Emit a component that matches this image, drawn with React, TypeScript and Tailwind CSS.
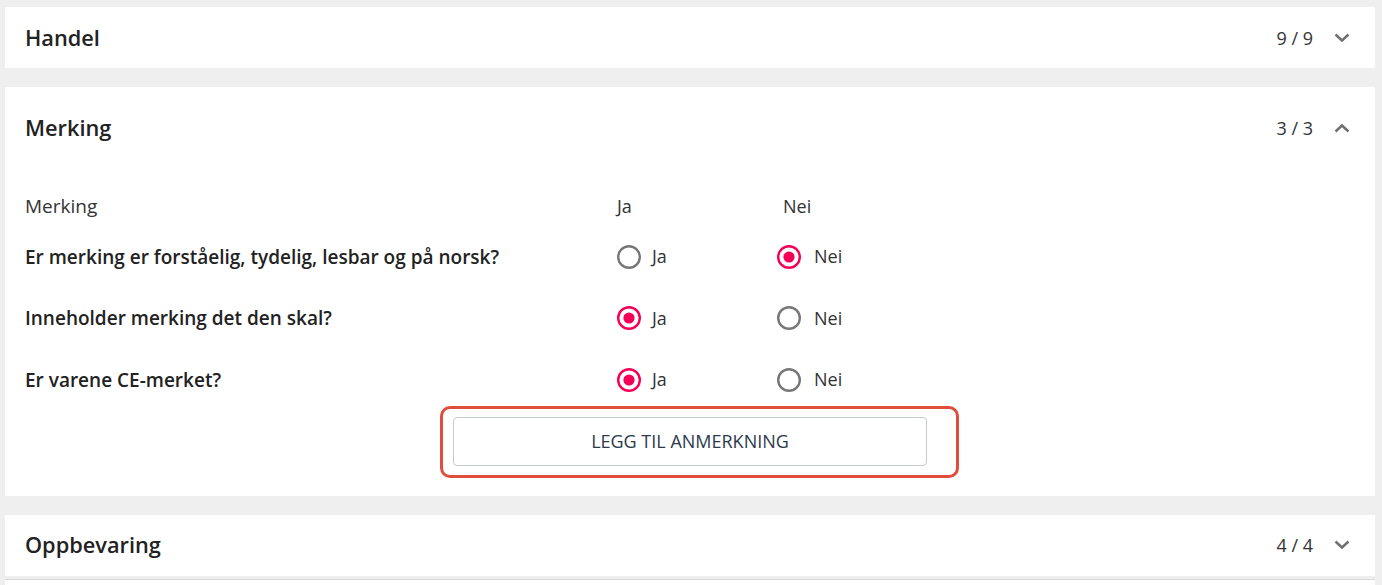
import React from "react";

const font = { fontFamily: '"Open Sans", "Noto Sans", Arial, sans-serif' };

function Chevron({ up }: { up?: boolean }) {
  return (
    <svg width="16" height="10" viewBox="0 0 16 10" className="block">
      {up ? (
        <polyline points="1.5,8.5 8,2.5 14.5,8.5" fill="none" stroke="#6f6f6f" strokeWidth="2.4" />
      ) : (
        <polyline points="1.5,1.5 8,7.5 14.5,1.5" fill="none" stroke="#6f6f6f" strokeWidth="2.4" />
      )}
    </svg>
  );
}

function Radio({ checked }: { checked: boolean }) {
  return (
    <svg width="24" height="24" viewBox="0 0 24 24" className="block shrink-0">
      <circle
        cx="12"
        cy="12"
        r="10.8"
        fill="none"
        stroke={checked ? "#f50057" : "#777777"}
        strokeWidth="2.4"
      />
      {checked && <circle cx="12" cy="12" r="5.6" fill="#f50057" />}
    </svg>
  );
}

function Header({ title, count, up, tall }: { title: string; count: string; up?: boolean; tall?: boolean }) {
  return (
    <div className={`flex items-center justify-between pl-[20px] pr-[25px] ${tall ? "h-[82px]" : "h-[61px]"}`}>
      <div className="text-[21.75px] font-semibold text-[#222222] leading-none">{title}</div>
      <div className="flex items-center gap-[21px]">
        <div className="text-[18px] text-[#333333] leading-none">{count}</div>
        <Chevron up={up} />
      </div>
    </div>
  );
}

const questions: { q: string; ja: boolean }[] = [
  { q: "Er merking er forståelig, tydelig, lesbar og på norsk?", ja: false },
  { q: "Inneholder merking det den skal?", ja: true },
  { q: "Er varene CE-merket?", ja: true },
];

export default function App() {
  return (
    <div className="min-h-[585px] bg-[#efefef] pt-[7px] pl-[5px] pr-[7px]" style={font}>
      <div className="flex flex-col gap-[19px]">
        <div className="bg-white">
          <Header title="Handel" count="9 / 9" />
        </div>

        <div className="bg-white">
          <Header title="Merking" count="3 / 3" up tall />
          <div className="px-[20px] pt-[17px] pb-[30px]">
            <div className="flex items-center h-[40px] text-[18px] text-[#333333]">
              <div className="w-[592px] text-[19px]">Merking</div>
              <div className="w-[160px]">Ja</div>
              <div className="pl-[6px]">Nei</div>
            </div>
            {questions.map((r) => (
              <div key={r.q} className="flex items-center h-[61.5px] text-[18px]">
                <div className="w-[592px] text-[19px] font-semibold text-[#222222]">{r.q}</div>
                <div className="w-[160px] flex items-center gap-[11px] text-[#333333]">
                  <Radio checked={r.ja} />
                  <span>Ja</span>
                </div>
                <div className="flex items-center gap-[13px] text-[#333333]">
                  <Radio checked={!r.ja} />
                  <span>Nei</span>
                </div>
              </div>
            ))}
            <div className="flex justify-center mt-[6px]">
              <div className="relative">
                <button className="w-[474px] h-[49px] rounded-[4px] border border-[#c6cad1] bg-white text-[18px] text-[#2b3a4c] uppercase">
                  Legg til anmerkning
                </button>
                <div className="absolute -left-[13px] -right-[32px] -top-[11px] -bottom-[12px] rounded-[10px] border-[3px] border-[#e14d3c] pointer-events-none" />
              </div>
            </div>
          </div>
        </div>

        <div className="bg-white">
          <Header title="Oppbevaring" count="4 / 4" />
        </div>
      </div>
      <div className="mt-[3px] border-t border-[#d9d9d9] bg-white h-[20px]" />
    </div>
  );
}
